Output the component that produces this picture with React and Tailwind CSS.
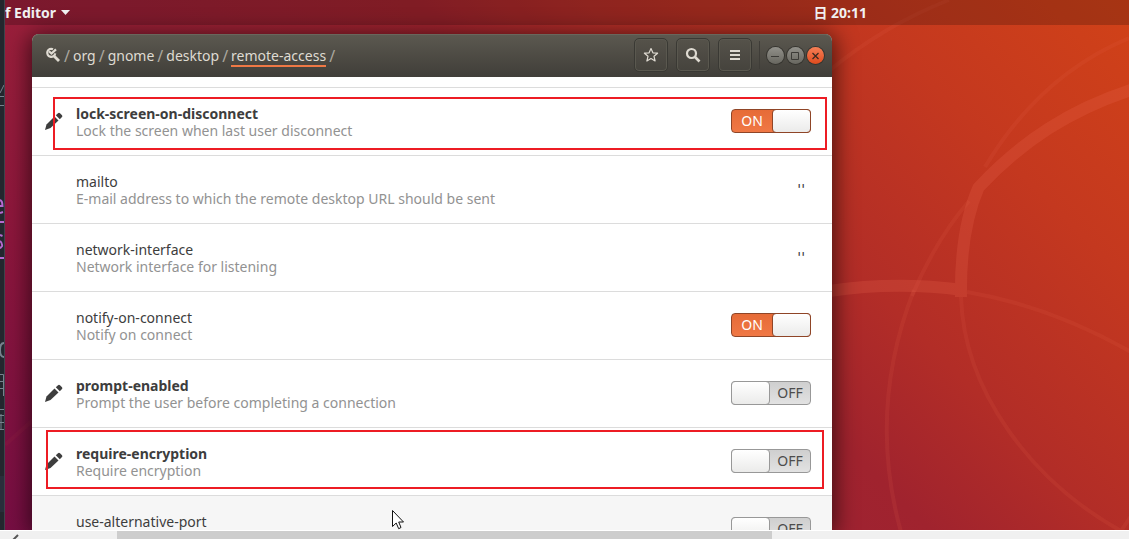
import React from "react";

const rows = [
  { key: "lock-screen-on-disconnect", text: "Lock the screen when last user disconnect", edited: true, on: true, mark: "top-[9px] right-[5px] bottom-[5px] left-[21px]" },
  { key: "mailto", text: "E-mail address to which the remote desktop URL should be sent", value: "''" },
  { key: "network-interface", text: "Network interface for listening", value: "''" },
  { key: "notify-on-connect", text: "Notify on connect", on: true },
  { key: "prompt-enabled", text: "Prompt the user before completing a connection", edited: true, on: false },
  { key: "require-encryption", text: "Require encryption", edited: true, on: false, mark: "top-[2px] right-[8px] bottom-[6px] left-[14px]" },
  { key: "use-alternative-port", text: "", on: false, hover: true },
];

function Wallpaper() {
  return (
    <svg className="absolute inset-0 h-full w-full" viewBox="5 0 1124 530" preserveAspectRatio="xMinYMin slice" fill="none" aria-hidden="true">
      <g stroke="#e8614a" strokeOpacity="0.13" strokeWidth="4">
        <path d="M829 71Q883 26 949 0" />
        <path d="M1129 38Q1040 75 985 167M969 201Q935 241 912 296" />
        <path d="M914 290Q867 410 901 532" />
        <path d="M961 297C964 390 1030 480 1121 531L1131 516" />
        <path d="M967 292Q1050 306 1131 352" />
        <path d="M5 445L33 420" strokeOpacity="0.05" />
      </g>
      <g stroke="#ee6a50" opacity="0.22" strokeWidth="12">
        <path d="M1131 90C1070 110 1022 141 978.500 187.500Q960 230 961 297" strokeLinejoin="bevel" />
        <path d="M829 291Q895 281 963 290" />
      </g>
    </svg>
  );
}

function Pencil() {
  return (
    <svg className="h-5 w-5" viewBox="0 0 20 20" fill="#3d3d3d" aria-hidden="true">
      <path d="M1 19L2.500 13.500L10.500 5.500L14.500 9.500L6.500 17Z" />
      <path d="M11.800 4.200L14 2.200Q15 1.400 16 2.300L18 4.200Q18.800 5.200 18 6.100L15.800 8.200Z" />
    </svg>
  );
}

function Switch({ name, on }) {
  return (
    <label className={`relative flex h-6 w-20 items-center rounded-[4px] border text-sm ${on ? "border-[#8f4527] bg-linear-to-b from-[#e66b37] to-[#f07845] text-white" : "border-[#989898] bg-linear-to-b from-[#cfcfcf] to-[#e2e2e2] text-[#4c4c4c]"}`}>
      <input type="checkbox" role="switch" aria-label={name} defaultChecked={on} className="absolute inset-0 m-0 cursor-pointer opacity-0" />
      {on && <span className="flex-1 text-center">ON</span>}
      <span className={`-my-px h-6 w-[39px] shrink-0 rounded-[4px] border bg-linear-to-b from-white to-[#ebebea] ${on ? "-mr-px border-[#8f4527]" : "-ml-px border-[#989898]"}`} />
      {!on && <span className="flex-1 text-center">OFF</span>}
    </label>
  );
}

function Row({ item }) {
  return (
    <li className={`relative flex h-[68px] shrink-0 items-center border-b border-[#dcdcdc] pr-[21px] pb-px pl-3 ${item.hover ? "bg-[#f6f6f6]" : "bg-white"}`}>
      <span className="w-8 shrink-0">{item.edited && <Pencil />}</span>
      <div className="h-[35px] min-w-0 flex-1 pt-px leading-[17px]">
        <p className={item.edited ? "font-bold text-[#3d3d3d]" : "text-[#3d3d3d]"}>{item.key}</p>
        {item.text && <p className="text-[#929292]">{item.text}</p>}
      </div>
      {item.value ? <span className="pr-[6px] font-['DejaVu_Sans',sans-serif] text-sm text-[#3d3d3d]">{item.value}</span> : <Switch name={item.key} on={item.on} />}
      {item.mark && <span className={`pointer-events-none absolute border-2 border-[#ed1c24] ${item.mark}`} />}
    </li>
  );
}

function ToolButton({ label, children }) {
  return (
    <button type="button" aria-label={label} className="flex h-[34px] w-[34px] items-center justify-center rounded-[5px] border border-[#3a3934] bg-linear-to-b from-[#55524a] to-[#45433d] shadow-[inset_0_0_0_1px_#5a584f]">
      {children}
    </button>
  );
}

function Slash() {
  return <span className="text-base text-[#aaa79f]">/</span>;
}

function Header() {
  return (
    <header className="flex h-[43px] shrink-0 items-center rounded-t-[7px] bg-linear-to-b from-[#5c5950] to-[#403e39] pr-2 pb-px pl-[13px] text-[#dfdbd2] shadow-[inset_0_1px_0_#69665c]">
      <svg className="mr-[3px] h-4 w-4" viewBox="0 0 16 16" fill="none" stroke="#dfdbd2" aria-hidden="true">
        <path d="M8 2.200A4 4 0 1 0 10.200 6.400" strokeWidth="2.200" />
        <path d="M9 9L14 14" strokeWidth="2.800" />
        <path d="M4 4.300L6.500 6.600L11 2.400" strokeWidth="2.200" />
      </svg>
      <nav className="flex flex-1 items-center gap-[3px] pt-[2px]">
        <Slash />
        <a href="#org">org</a>
        <Slash />
        <a href="#gnome">gnome</a>
        <Slash />
        <a href="#desktop">desktop</a>
        <Slash />
        <a href="#remote-access" className="mt-[2px] border-b-2 border-[#ef7845] leading-[18px]">remote-access</a>
        <Slash />
      </nav>
      <div className="flex gap-2">
        <ToolButton label="Bookmarks">
          <svg className="h-4 w-4" viewBox="0 0 16 16" fill="none" stroke="#dfdbd2" strokeWidth="1.200" strokeLinejoin="round" aria-hidden="true">
            <path d="M8 1.500L9.900 5.800L14.600 6.200L11 9.300L12.100 14L8 11.600L3.900 14L5 9.300L1.400 6.200L6.100 5.800Z" />
          </svg>
        </ToolButton>
        <ToolButton label="Search">
          <svg className="h-4 w-4" viewBox="0 0 16 16" fill="none" stroke="#dfdbd2" aria-hidden="true">
            <circle cx="6.500" cy="6.500" r="4.500" strokeWidth="2.200" />
            <path d="M9.500 9.500L14.500 14.500" strokeWidth="2.600" />
          </svg>
        </ToolButton>
        <ToolButton label="Menu">
          <svg className="h-4 w-4" viewBox="0 0 16 16" fill="#dfdbd2" aria-hidden="true">
            <path d="M3 3h10v2H3zM3 7h10v2H3zM3 11h10v2H3z" />
          </svg>
        </ToolButton>
      </div>
      <span className="mr-[7px] ml-[7px] h-7 w-px bg-[#3f3d38]" />
      <div className="flex gap-[3px]">
        <button type="button" aria-label="Minimize" className="flex h-[17px] w-[17px] items-center justify-center rounded-full bg-linear-to-b from-[#92918b] to-[#686760] shadow-[0_0_0_1px_#35342f]">
          <svg className="h-[17px] w-[17px]" viewBox="0 0 17 17" stroke="#3c3b37" aria-hidden="true"><path d="M4 9.500H12" /></svg>
        </button>
        <button type="button" aria-label="Maximize" className="flex h-[17px] w-[17px] items-center justify-center rounded-full bg-linear-to-b from-[#92918b] to-[#686760] shadow-[0_0_0_1px_#35342f]">
          <svg className="h-[17px] w-[17px]" viewBox="0 0 17 17" fill="none" stroke="#3c3b37" aria-hidden="true"><path d="M4.500 5.500H11.500V12.500H4.500Z" /></svg>
        </button>
        <button type="button" aria-label="Close" className="flex h-[17px] w-[17px] items-center justify-center rounded-full bg-linear-to-b from-[#f67f55] to-[#df4a1b] shadow-[0_0_0_1px_#35342f]">
          <svg className="h-[17px] w-[17px]" viewBox="0 0 17 17" stroke="#3c2a20" strokeWidth="1.300" aria-hidden="true"><path d="M5.500 6L11.500 12M11.500 6L5.500 12" /></svg>
        </button>
      </div>
    </header>
  );
}

function EditorEdge() {
  return (
    <aside aria-hidden="true" className="w-[5px] shrink-0 border-r border-[#3e444c] bg-[#23272e]">
      <svg className="h-[530px] w-1" viewBox="0 0 4 530" fill="none">
        <path d="M0 476H4V512H0Z" fill="#292e3b" />
        <g stroke="#77838e">
          <path d="M0 93L4 85M0 96.500H4M0 105.500H4" />
          <path d="M4 343Q0 343 0 350T4 357" strokeWidth="2" />
          <path d="M0 374.500H3.500V396M0 381.500H3M0 388.500H3M0 409.500H4M1 414V429M0 415.500H4M0 422.500H4M0 429.500H4" />
        </g>
        <g stroke="#b56ad0" strokeWidth="2">
          <path d="M0 200Q2.500 201 2.500 206H0M0 213L3 212M0 222H5M0 235L2.500 236M0 241Q2.500 243 2 246L0 248.500M0 258H5" />
        </g>
      </svg>
    </aside>
  );
}

export default function App() {
  return (
    <div className="flex h-screen flex-col overflow-hidden bg-[#f0f0f0] font-['Noto_Sans','Noto_Sans_CJK_SC',sans-serif] text-sm">
      <div className="flex min-h-0 flex-1 overflow-hidden">
        <EditorEdge />
        <div className="relative flex min-w-0 flex-1 flex-col overflow-hidden bg-[linear-gradient(45deg,#760e43_0%,#8c163c_18%,#9a1f3a_32%,#a0232e_56%,#b22d27_67%,#c4381f_83%,#d14218_100%)]">
          <Wallpaper />
          <div className="relative h-[25px] shrink-0 bg-black/20">
            <div className="flex h-full max-w-[862px] items-center justify-between font-bold text-[#f2f2f2]">
              <button type="button" className="flex items-center gap-[5px]">
                <span>f Editor</span>
                <svg className="h-[5px] w-[9px]" viewBox="0 0 9 5" fill="#f2f2f2" aria-hidden="true"><path d="M0 0H9L4.500 5Z" /></svg>
              </button>
              <time>日 20:11</time>
            </div>
          </div>
          <main className="relative mt-[9px] ml-[27px] flex min-h-0 max-w-[800px] flex-1 flex-col rounded-t-[7px] bg-white shadow-[0_3px_22px_3px_rgba(0,0,0,0.6)]">
            <Header />
            <ul className="flex min-h-0 flex-1 flex-col overflow-hidden">
              <li aria-hidden="true" className="h-[11px] shrink-0 border-b border-[#dcdcdc] bg-white" />
              {rows.map((item) => <Row key={item.key} item={item} />)}
            </ul>
            <svg className="absolute bottom-0 left-[360px] h-5 w-3" viewBox="0 0 12 20" aria-hidden="true">
              <path d="M.5.500V16.500L4.200 13L6.700 18.700L9 17.500L6.700 12H11.500Z" fill="#fff" stroke="#111" />
            </svg>
          </main>
        </div>
      </div>
      <div className="flex h-[9px] shrink-0 border-t border-white bg-[#f0f0f0]">
        <svg className="ml-3 h-2 w-2" viewBox="0 0 8 8" fill="none" stroke="#555" strokeWidth="2" aria-hidden="true"><path d="M6 4L1 9" /></svg>
        <span className="ml-[97px] w-[58%] bg-[#cdcdcd]" />
      </div>
    </div>
  );
}
